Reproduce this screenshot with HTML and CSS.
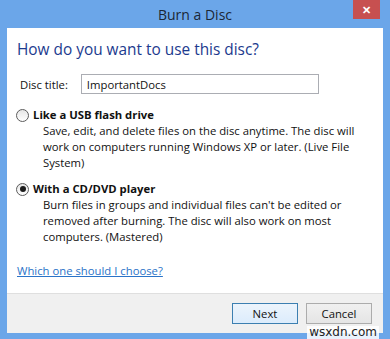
FILE: index.html
```html
<!DOCTYPE html>
<html>
<head>
  <title>Burn a Disc</title>
  <link rel="stylesheet" href="styles.css">
</head>
<body>
  <div class="window">
    <div class="titlebar">
      <span></span>
      <span class="title">Burn a Disc</span>
      <span class="close">&#x2715;</span>
    </div>

    <div class="panel">
      <h1>How do you want to use this disc?</h1>

      <div class="title-row">
        <label for="discTitle">Disc title:</label>
        <input type="text" id="discTitle" value="ImportantDocs" />
      </div>

      <div class="option">
        <div class="option-head">
          <span class="radio"></span>
          <b>Like a USB flash drive</b>
        </div>
        <p>Save, edit, and delete files on the disc anytime. The disc will work on computers running Windows XP or later. (Live File System)</p>
      </div>

      <div class="option">
        <div class="option-head">
          <span class="radio checked"></span>
          <b>With a CD/DVD player</b>
        </div>
        <p>Burn files in groups and individual files can't be edited or removed after burning. The disc will also work on most computers. (Mastered)</p>
      </div>

      <a class="help" href="#">Which one should I choose?</a>
    </div>

    <div class="footer">
      <button class="btn default">Next</button>
      <button class="btn">Cancel</button>
    </div>
  </div>
  <div class="watermark">wsxdn.com</div>
</body>
</html>
```
FILE: styles.css
```css
body {
  margin: 0;
  width: 390px;
  height: 339px;
  background-color: #6ba6e9;
  font-family: "Open Sans", "Noto Sans", sans-serif;
  position: relative;
  overflow: hidden;
}

.window {
  display: flex;
  flex-direction: column;
}

.titlebar {
  height: 28px;
  display: grid;
  grid-template-columns: 1fr auto 1fr;
}

.title {
  font-size: 14px;
  line-height: 30px;
  color: #1b2736;
}

.close {
  justify-self: end;
  width: 27px;
  height: 19px;
  margin-right: 10px;
  background-color: #c75050;
  color: #fff;
  font-size: 11px;
  font-weight: bold;
  line-height: 19px;
  text-align: center;
}

.panel {
  margin: 0 7px;
  background-color: #fff;
  padding: 12px 10px 14px 10px;
  display: flex;
  flex-direction: column;
  font-size: 11.3px;
  color: #111;
}

h1 {
  margin: 0 0 14px 0;
  font-size: 15.4px;
  font-weight: normal;
  line-height: 20px;
  color: #1c3a8e;
}

.title-row {
  display: flex;
  align-items: center;
  gap: 13px;
  padding-left: 3px;
  margin-bottom: 13px;
}

.title-row input {
  width: 226px;
  height: 18px;
  padding: 0 5px;
  border: 1px solid #abadb3;
  font-family: inherit;
  font-size: 11.3px;
  color: #111;
}

.option {
  margin-bottom: 10px;
}

.option-head {
  display: flex;
  align-items: center;
  gap: 4px;
  line-height: 16px;
}

.option b {
  font-weight: bold;
}

.option p {
  margin: 0;
  padding-left: 26px;
  line-height: 16px;
}

.radio {
  width: 11px;
  height: 11px;
  margin-left: -1px;
  border: 1px solid #5c5c5c;
  border-radius: 50%;
  background: linear-gradient(#e6e6e6, #fff);
  display: flex;
  align-items: center;
  justify-content: center;
}

.radio.checked::after {
  content: "";
  width: 6px;
  height: 6px;
  border-radius: 50%;
  background-color: #1a1a1a;
}

.help {
  margin-top: 8px;
  line-height: 16px;
  color: #2a73c8;
  text-decoration: underline;
  align-self: flex-start;
}

.footer {
  margin: 0 7px;
  height: 40px;
  box-sizing: border-box;
  border-top: 1px solid #dfdfdf;
  background-color: #f0f0f0;
  display: flex;
  justify-content: flex-end;
  align-items: flex-start;
  gap: 8px;
  padding: 9px 11px 0 0;
}

.btn {
  width: 66px;
  height: 21px;
  border: 1px solid #acacac;
  background: linear-gradient(#f0f0f0, #e5e5e5);
  font-family: inherit;
  font-size: 11.3px;
  color: #111;
  padding: 0;
}

.btn.default {
  border-color: #3c7fb1;
  background: linear-gradient(#ecf4fc, #dcecfc);
}

.watermark {
  position: absolute;
  right: 11px;
  bottom: 0;
  padding: 0 2px;
  background-color: rgba(255, 255, 255, 0.85);
  font-family: "DejaVu Sans", sans-serif;
  font-size: 12px;
  line-height: 13px;
  color: #222;
}
```
